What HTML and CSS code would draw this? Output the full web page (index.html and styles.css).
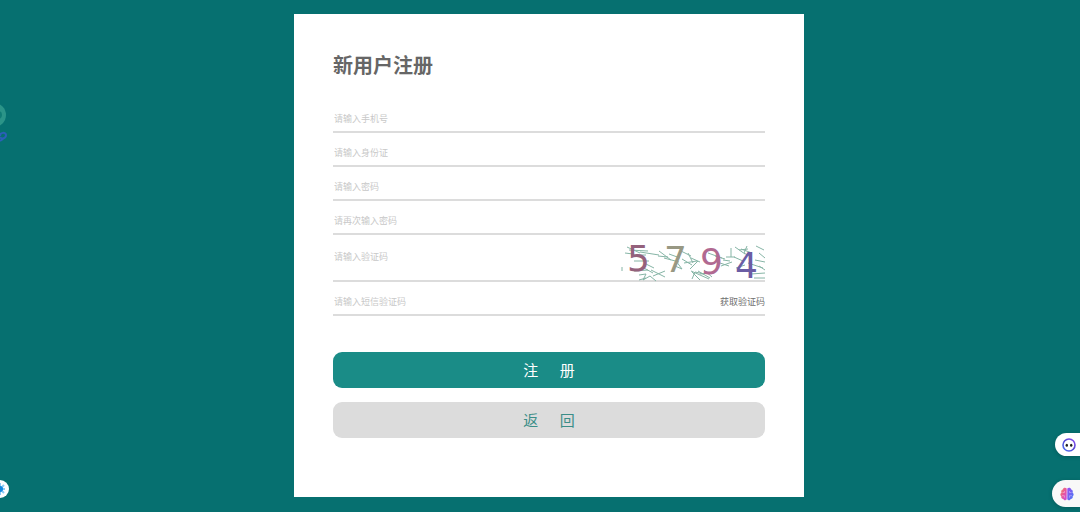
FILE: index.html
```html
<!DOCTYPE html>
<html lang="zh-CN">
<head>
<meta charset="utf-8">
<meta name="viewport" content="width=device-width, initial-scale=1">
<title>新用户注册</title>
<link rel="stylesheet" href="styles.css">
</head>
<body>
<main class="page">
  <form class="card">
    <h1 class="title">新用户注册</h1>
    <div class="fields">
      <div class="row"><input class="field" type="tel" aria-label="手机号" placeholder="请输入手机号"></div>
      <div class="row"><input class="field" type="text" aria-label="身份证" placeholder="请输入身份证"></div>
      <div class="row"><input class="field" type="password" aria-label="密码" placeholder="请输入密码"></div>
      <div class="row"><input class="field" type="password" aria-label="再次输入密码" placeholder="请再次输入密码"></div>
      <div class="row row-captcha">
        <input class="field" type="text" aria-label="验证码" placeholder="请输入验证码">
        <svg class="captcha" viewBox="0 0 143 38" width="143" height="38" role="img" aria-label="验证码图片">
          <g class="noise">
            <path d="M5 4l13 6M7 7l19 1M3 10l8 1M9 12h15M18 9l19 3M12 18h15M12 28l14-1M22 20l10 5M0 24v4"/>
            <path d="M17 32l7-1-3 6 7-4 6 5M17 37l7-2M22 25l9 5M29 27l14 7M31 33l12-5"/>
            <path d="M37 8l12 9M36 13l10 1M42 15l15 4M47 11l11 4M54 18l6 8-7-3M59 8l10 5M60 16l10 6M62 20l13-2"/>
            <path d="M66 10l5 10M69 15l9 4M68 26l8-8M69 28l18 8M70 29l8 8M70 36l3-7 9 2M76 28l12 7M78 31l10-1M82 27l8 7"/>
            <path d="M86 10l14 5M93 13l10 3M95 19l12 4M99 23l11-4M101 17l7 1M109 5v9M104 14h9M113 4l10 7M117 7l9-1"/>
            <path d="M119 6l11 4M122 10l7 4M125 3l-3 7M134 3l8 4M137 10l6 5M112 14l9 4M126 20l15 5M133 17l10 2M129 31l14-1M132 35h11M137 23l6 4M114 25l9-3"/>
          </g>
          <g class="digits">
            <text x="5" y="28" fill="#94617c">5</text>
            <text x="42" y="29" fill="#989883">7</text>
            <text x="78" y="31" fill="#b16991">9</text>
            <text x="113" y="35" fill="#6b5da4">4</text>
          </g>
        </svg>
      </div>
      <div class="row">
        <input class="field" type="text" aria-label="短信验证码" placeholder="请输入短信验证码">
        <button class="send-code" type="button">获取验证码</button>
      </div>
    </div>
    <div class="actions">
      <button class="btn btn-primary" type="submit">注　&nbsp;&nbsp;册</button>
      <button class="btn btn-secondary" type="button">返　&nbsp;&nbsp;回</button>
    </div>
  </form>
</main>

<svg class="float float-ring" width="7" height="40" viewBox="0 0 7 40" aria-hidden="true">
  <circle cx="-6" cy="12" r="12" fill="#2b9488"/>
  <circle cx="-2" cy="12" r="4" fill="#107c75"/>
  <path d="M0 33c0-4 6-4 6-1s-4 5-6 2M0 38l3-2" fill="none" stroke="#2c5fb8" stroke-width="2"/>
</svg>

<svg class="float float-gear" width="10" height="20" viewBox="0 0 10 20" aria-hidden="true">
  <circle cx="0" cy="10" r="9" fill="#fff"/>
  <path d="M0 4v12M-4 6l8 8M-4 14l8-8M0 10h5" stroke="#8accf5" stroke-width="2"/>
  <circle cx="0" cy="10" r="3" fill="#1689df"/>
</svg>

<button class="float pill pill-bot" type="button" aria-label="助手">
  <svg width="14" height="14" viewBox="0 0 14 14" aria-hidden="true">
    <defs>
      <linearGradient id="ring" x1="1" y1="0" x2="0" y2="1">
        <stop offset="0" stop-color="#8a4cf0"/><stop offset=".5" stop-color="#5147d2"/><stop offset="1" stop-color="#4a74f4"/>
      </linearGradient>
    </defs>
    <circle cx="7" cy="7" r="6" fill="#fff" stroke="url(#ring)" stroke-width="1.600"/>
    <ellipse cx="4.800" cy="7.200" rx="1.200" ry="1.500" fill="#222"/>
    <ellipse cx="9.200" cy="7.200" rx="1.200" ry="1.500" fill="#222"/>
  </svg>
</button>

<button class="float pill pill-brain" type="button" aria-label="智能工具">
  <svg width="14" height="14" viewBox="0 0 14 14" aria-hidden="true">
    <defs>
      <linearGradient id="lobe-l" x1="0" y1="0" x2="1" y2="1">
        <stop offset="0" stop-color="#f29057"/><stop offset=".5" stop-color="#e9559c"/><stop offset="1" stop-color="#c34be0"/>
      </linearGradient>
      <linearGradient id="lobe-r" x1="0" y1="0" x2="1" y2="1">
        <stop offset="0" stop-color="#a04df0"/><stop offset="1" stop-color="#3f7bf5"/>
      </linearGradient>
    </defs>
    <path d="M6.700 1.500C5.500 0 3 .6 2.800 2.500 1.200 2.700.8 4.500 1.500 5.500 0 6.500 0 8.500 1.300 9.200.9 11 2.200 12 3.300 11.900 3.900 13.600 6 13.600 6.700 12.300z" fill="url(#lobe-l)"/>
    <path d="M7.300 1.500C8.500 0 11 .6 11.200 2.500 12.800 2.700 13.200 4.500 12.500 5.500 14 6.500 14 8.500 12.700 9.200 13.100 11 11.800 12 10.700 11.900 10.100 13.600 8 13.600 7.300 12.300z" fill="url(#lobe-r)"/>
    <path d="M2.500 5.500h2V4M2 8.700h2.400v2M11.500 5.500h-2V4M12 8.700H9.600v2" fill="none" stroke="#fff" stroke-opacity=".7" stroke-width=".5"/>
  </svg>
</button>
</body>
</html>
```
FILE: styles.css
```css
* {
  box-sizing: border-box;
}

body {
  margin: 0;
  min-height: 100vh;
  background: #067070;
  font-family: "Noto Sans CJK SC", "Liberation Sans", sans-serif;
  overflow-x: hidden;
}

button,
input {
  font-family: inherit;
}

.page {
  display: flex;
  justify-content: center;
  padding: 14px 0 14px 18px;
}

.card {
  width: 100%;
  max-width: 510px;
  padding: 36px 39px 59px;
  background: #fff;
}

.title {
  margin: 0 0 19px;
  color: #666;
  font-size: 20px;
  line-height: 30px;
}

.row {
  display: flex;
  align-items: center;
  height: 34px;
  padding-top: 6px;
  border-bottom: 2px solid #dcdcdc;
}

.row-captcha {
  align-items: flex-start;
  height: 47px;
}

.field {
  flex: 1;
  min-width: 0;
  height: 26px;
  padding: 0 1px;
  border: 0;
  outline: 0;
  background: transparent;
  color: #666;
  font-size: 9px;
}

.row-captcha .field {
  height: 30px;
}

.field::placeholder {
  color: #c8c8c8;
  opacity: 1;
}

.captcha {
  flex: none;
  margin-top: 2px;
  overflow: visible;
}

.noise {
  fill: none;
  stroke: #86b5a6;
  stroke-width: 1;
}

.digits {
  font-family: "DejaVu Sans", sans-serif;
  font-size: 36px;
}

.digits text {
  stroke: currentColor;
  stroke-width: 0;
}

.send-code {
  padding: 0;
  border: 0;
  background: transparent;
  color: #707070;
  font-size: 9px;
  cursor: pointer;
}

.actions {
  display: grid;
  gap: 14px;
  margin-top: 36px;
}

.btn {
  height: 36px;
  padding: 0 0 2px;
  border: 0;
  border-radius: 9px;
  font-size: 15px;
  cursor: pointer;
}

.btn-primary {
  background: #1a8c87;
  color: #fff;
}

.btn-secondary {
  background: #dcdcdc;
  color: #3b8e88;
}

.float {
  position: fixed;
}

.float-ring {
  left: 0;
  top: 103px;
}

.float-gear {
  left: 0;
  bottom: 13px;
}

.pill {
  display: flex;
  align-items: center;
  right: 0;
  border: 0;
  background: #fff;
  box-shadow: 0 1px 4px rgba(0, 0, 0, 0.2);
}

.pill-bot {
  bottom: 56px;
  width: 25px;
  height: 23px;
  padding: 0 0 0 7px;
  border-radius: 12px 0 0 12px;
}

.pill-brain {
  bottom: 5px;
  width: 28px;
  height: 27px;
  padding: 0 0 0 8px;
  border-radius: 14px 0 0 14px;
  background: #f8f8f8;
}
```
